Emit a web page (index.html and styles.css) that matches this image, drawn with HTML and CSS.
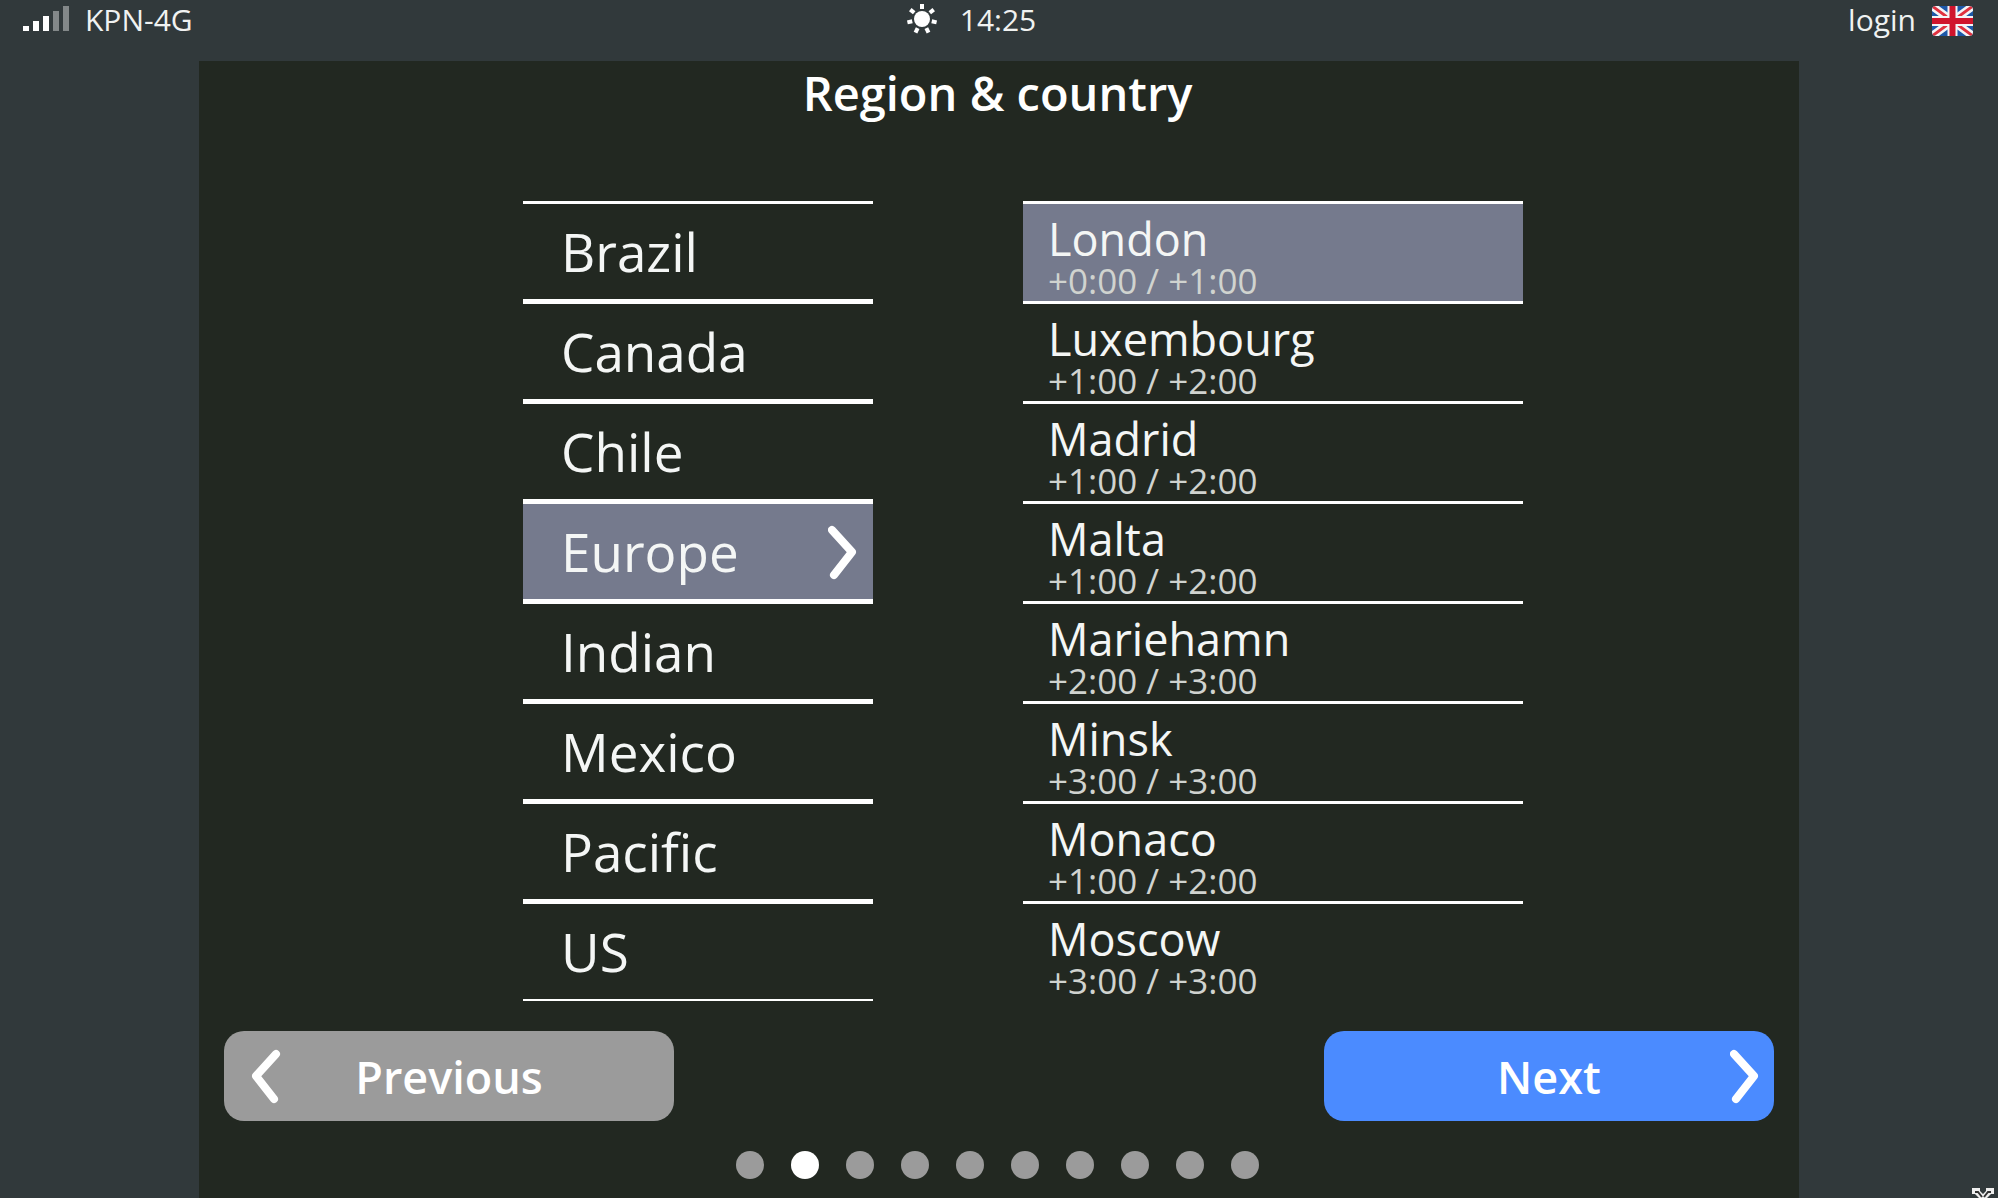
FILE: index.html
```html
<!DOCTYPE html>
<html lang="en">
	<head>
		<meta charset="utf-8"/>
		<title>Region &amp; country</title>
		<link rel="stylesheet" href="styles.css">
	</head>
	<body>
		<header class="status">
			<div class="status-left">
				<svg class="signal" width="48" height="40" viewBox="0 0 48 40" fill="#fff">
					<rect x="0" y="26" width="6" height="5"/>
					<rect x="10" y="21" width="6" height="10"/>
					<rect x="20" y="16" width="6" height="15"/>
					<rect x="30" y="11" width="6" height="20" opacity=".4"/>
					<rect x="40" y="6" width="6" height="25" opacity=".4"/>
				</svg>
				<span>KPN-4G</span>
				<svg class="sun" width="32" height="40" viewBox="-16 -19 32 40" fill="#fff">
					<circle r="8"/>
					<g id="rays">
						<rect x="-2" y="-15" width="4" height="5"/>
						<rect x="-2" y="-15" width="4" height="5" transform="rotate(51.4)"/>
						<rect x="-2" y="-15" width="4" height="5" transform="rotate(102.9)"/>
						<rect x="-2" y="-15" width="4" height="5" transform="rotate(154.3)"/>
						<rect x="-2" y="-15" width="4" height="5" transform="rotate(205.7)"/>
						<rect x="-2" y="-15" width="4" height="5" transform="rotate(257.1)"/>
						<rect x="-2" y="-15" width="4" height="5" transform="rotate(308.6)"/>
					</g>
				</svg>
			</div>
			<time>14:25</time>
			<div class="status-right">
				<a class="login" href="#">login</a>
				<svg class="flag" width="41" height="30" viewBox="0 0 41 30">
					<defs>
						<clipPath id="round"><rect width="41" height="30" rx="4"/></clipPath>
					</defs>
					<g clip-path="url(#round)">
						<rect width="41" height="30" fill="#1d58a8"/>
						<path d="M0 0L41 30M41 0L0 30" stroke="#f4f4f6" stroke-width="8"/>
						<path d="M0 0L41 30M41 0L0 30" stroke="#e0313f" stroke-width="3"/>
						<path d="M20.5 0V30M0 15H41" stroke="#f4f4f6" stroke-width="10"/>
						<path d="M20.5 0V30M0 15H41" stroke="#d0142c" stroke-width="6"/>
					</g>
				</svg>
			</div>
		</header>

		<main class="panel">
			<h1 class="title">Region &amp; country</h1>

			<div class="lists">
				<div class="regions">
					<button class="region">Brazil</button>
					<button class="region">Canada</button>
					<button class="region">Chile</button>
					<button class="region selected">Europe
						<svg class="arrow" width="30" height="56" viewBox="0 0 30 56"><path d="M4 6L24 28L6 51"/></svg>
					</button>
					<button class="region">Indian</button>
					<button class="region">Mexico</button>
					<button class="region">Pacific</button>
					<button class="region">US</button>
				</div>
				<div class="cities">
					<button class="city selected">London<span class="offset">+0:00 / +1:00</span></button>
					<button class="city">Luxembourg<span class="offset">+1:00 / +2:00</span></button>
					<button class="city">Madrid<span class="offset">+1:00 / +2:00</span></button>
					<button class="city">Malta<span class="offset">+1:00 / +2:00</span></button>
					<button class="city">Mariehamn<span class="offset">+2:00 / +3:00</span></button>
					<button class="city">Minsk<span class="offset">+3:00 / +3:00</span></button>
					<button class="city">Monaco<span class="offset">+1:00 / +2:00</span></button>
					<button class="city">Moscow<span class="offset">+3:00 / +3:00</span></button>
				</div>
			</div>

			<div class="buttons">
				<button class="btn prev">
					<svg class="arrow" width="30" height="56" viewBox="0 0 30 56"><path d="M25 6L5 28L23 51"/></svg>
					<span>Previous</span>
				</button>
				<button class="btn next">
					<span>Next</span>
					<svg class="arrow" width="30" height="56" viewBox="0 0 30 56"><path d="M4 6L24 28L6 51"/></svg>
				</button>
			</div>

			<div class="dots">
				<span class="dot"></span>
				<span class="dot active"></span>
				<span class="dot"></span>
				<span class="dot"></span>
				<span class="dot"></span>
				<span class="dot"></span>
				<span class="dot"></span>
				<span class="dot"></span>
				<span class="dot"></span>
				<span class="dot"></span>
			</div>
		</main>

		<!-- mouse pointer parked in the corner -->
		<svg class="pointer" width="22" height="10" viewBox="0 0 22 10">
			<path d="M0 0H8V3L11 6L14 3V0H22V6H19L15 10H7L3 6H0Z" fill="#eee"/>
			<path d="M3 4H6L10 9M19 4H16L12 9" fill="none" stroke="#333" stroke-width="2"/>
		</svg>
	</body>
</html>
```
FILE: styles.css
```css
* {
	box-sizing : border-box;
}

body {
	display        : flex;
	flex-direction : column;
	min-height     : 100vh;
	margin         : 0;
	background     : #31393b;
	color          : #fff;
	font-family    : 'Open Sans', sans-serif;
}

button {
	margin      : 0;
	border      : 0;
	background  : none;
	color       : inherit;
	font-family : inherit;
	cursor      : pointer;
}

svg {
	flex-shrink : 0;
}

/* top bar */
.status {
	display               : grid;
	grid-template-columns : 1fr auto 1fr;
	padding     : 0 25px 21px 23px;
	font-size   : 30px;
	line-height : 40px;
	color       : #f0f2f1;
}

.status-left,
.status-right {
	display : flex;
}

.status-left {
	gap : 14px;
}

.status-right {
	justify-content : flex-end;
	align-items     : flex-start;
	gap             : 16px;
}

.sun {
	margin-left  : auto;
	margin-right : 22px;
}

.login {
	color           : inherit;
	text-decoration : none;
}

.flag {
	margin-top : 6px;
}

/* wizard page */
.panel {
	flex       : 1;
	width      : 100%;
	max-width  : 1600px;
	margin     : 0 auto;
	background : #222821;
}

.title {
	margin      : 0 0 76px;
	padding     : 0 3px 0 0;
	font-size   : 47px;
	font-weight : 600;
	line-height : 64px;
	text-align  : center;
}

.lists {
	display : flex;
	gap     : 150px;
	padding : 0 276px 0 324px;
}

.regions {
	flex : 350 1 0;
}

.cities {
	flex : 500 1 0;
}

.region {
	display         : flex;
	align-items     : center;
	justify-content : space-between;
	width         : 100%;
	height        : 100px;
	padding       : 0 15px 0 38px;
	border-top    : 3px solid #fff;
	border-bottom : 2px solid #fff;
	font-size     : 53px;
	color         : #f4f6f5;
}

.city {
	display     : block;
	width       : 100%;
	height      : 100px;
	padding     : 10px 25px 3px;
	border-top  : 3px solid #fff;
	color       : #f4f6f5;
	font-size   : 45px;
	line-height : 50px;
	text-align  : left;
}

.offset {
	display     : block;
	color       : #d0d3cf;
	font-size   : 35px;
	line-height : 34px;
}

.selected {
	background : #757a8d;
}

.arrow path {
	fill            : none;
	stroke          : #fff;
	stroke-width    : 8px;
	stroke-linecap  : round;
	stroke-linejoin : round;
}

.buttons {
	display         : flex;
	justify-content : space-between;
	padding         : 30px 25px;
}

/* side columns keep the label in the middle */
.btn {
	display               : grid;
	grid-template-columns : 30px 1fr 30px;
	align-items   : center;
	width         : 450px;
	height        : 90px;
	border-radius : 20px;
	font-size     : 45px;
	font-weight   : 600;
}

.btn span {
	grid-column : 2;
}

.prev {
	padding    : 0 27px;
	background : #9b9b9b;
}

.next {
	padding    : 0 14px;
	background : #4b8bff;
}

.dots {
	display         : flex;
	justify-content : center;
	gap             : 27px;
	padding         : 0 3px 18px 0;
}

.dot {
	width         : 28px;
	height        : 28px;
	border-radius : 50%;
	background    : #9b9b9b;
}

.dot.active {
	background : #fff;
}

.pointer {
	position : fixed;
	right    : 4px;
	bottom   : 0;
}
```
